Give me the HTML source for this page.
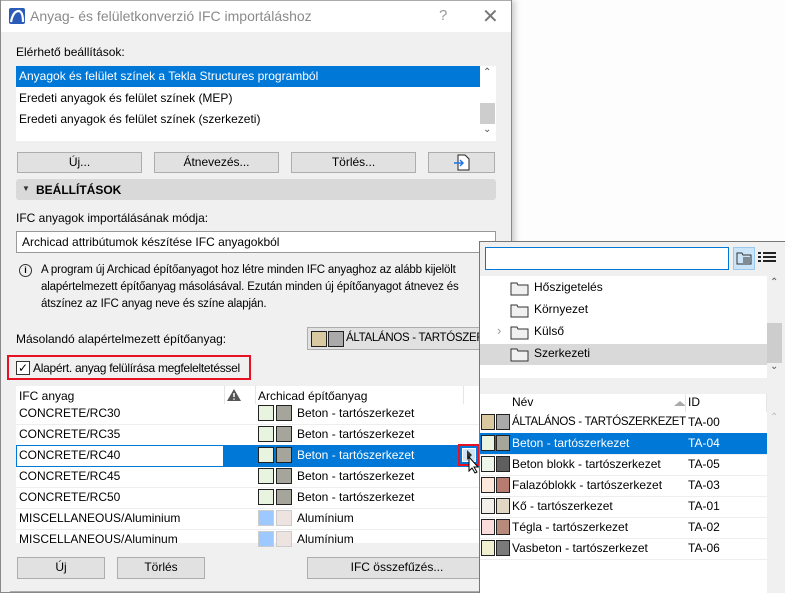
<!DOCTYPE html>
<html><head><meta charset="utf-8"><style>
*{box-sizing:border-box;margin:0;padding:0}
body{width:785px;height:593px;overflow:hidden;background:#fdfdfd;font-family:"Liberation Sans",sans-serif;font-size:12px;color:#000;position:relative}
.a{position:absolute;white-space:nowrap}
.btn{position:absolute;background:#e1e1e1;border:1px solid #adadad;text-align:center;line-height:19px;font-size:12px}
.sw{position:absolute;width:16px;height:16px;border:1px solid #222}
.ps{position:absolute;width:14px;height:16px;border:1px solid #222}
.t{position:absolute;line-height:21px;height:21px;white-space:nowrap}
.n{letter-spacing:-0.3px}
</style></head><body>
<!-- dialog -->
<div class="a" style="left:0;top:0;width:512px;height:593px;background:#f0f0f0;border:1px solid #888;border-top:none;box-shadow:3px 0 6px rgba(0,0,0,.2)"></div>
<div class="a" style="left:1px;top:0;width:510px;height:32px;background:#fff;border-top:1px solid #aaa"></div>
<svg class="a" style="left:9px;top:8px" width="16" height="16"><rect width="16" height="16" rx="2" fill="#2a5bb8"/><path d="M2 14 Q4 3 10 3 Q14 4 14 14" stroke="#fff" stroke-width="2.2" fill="none"/></svg>
<div class="a" style="left:30px;top:8px;font-size:14px;color:#8a8a8a">Anyag- és felületkonverzió IFC importáláshoz</div>
<div class="a" style="left:439px;top:7px;font-size:15px;color:#999">?</div>
<div class="a" style="left:482px;top:4px;font-size:20px;color:#777">✕</div>
<div class="a" style="left:16px;top:45px">Elérhető beállítások:</div>
<div class="a" style="left:16px;top:66px;width:480px;height:75px;background:#fff"></div>
<div class="a" style="left:16px;top:66px;width:464px;height:21px;background:#0078d7"></div>
<div class="t" style="left:19px;top:66px;color:#fff">Anyagok és felület színek a Tekla Structures programból</div>
<div class="t" style="left:19px;top:88px">Eredeti anyagok és felület színek (MEP)</div>
<div class="t" style="left:19px;top:109px">Eredeti anyagok és felület színek (szerkezeti)</div>
<div class="a" style="left:480px;top:103px;width:15px;height:21px;background:#cdcdcd"></div>
<div class="a" style="left:483px;top:67px;font-size:10px;color:#555">&#8963;</div>
<div class="a" style="left:483px;top:124px;font-size:10px;color:#555">&#8964;</div>
<div class="btn" style="left:17px;top:152px;width:125px;height:21px">Új...</div>
<div class="btn" style="left:154px;top:152px;width:125px;height:21px">Átnevezés...</div>
<div class="btn" style="left:291px;top:152px;width:125px;height:21px">Törlés...</div>
<div class="btn" style="left:428px;top:152px;width:67px;height:21px"></div>
<svg class="a" style="left:454px;top:154px" width="16" height="17"><path d="M4 1h7l4 4v11H4z" fill="#fff" stroke="#222"/><path d="M0 9h9M6 6l3 3-3 3" stroke="#1a73e8" stroke-width="1.4" fill="none"/></svg>
<div class="a" style="left:16px;top:179px;width:480px;height:21px;background:#d9d9d9;border-radius:3px"></div>
<div class="a" style="left:22px;top:184px;font-size:8px;color:#333">▼</div>
<div class="a" style="left:36px;top:183px;font-weight:bold">BEÁLLÍTÁSOK</div>
<div class="a" style="left:16px;top:211px">IFC anyagok importálásának módja:</div>
<div class="a" style="left:16px;top:231px;width:480px;height:22px;background:#fff;border:1px solid #999"></div>
<div class="a" style="left:22px;top:235px">Archicad attribútumok készítése IFC anyagokból</div>
<div class="a" style="left:19px;top:264px;width:13px;height:13px;border:1px solid #333;border-radius:50%;font-size:9px;text-align:center;line-height:11px;font-weight:bold">i</div>
<div class="a" style="left:41px;top:262px;line-height:17px;font-size:11.5px;letter-spacing:-0.15px">A program új Archicad építőanyagot hoz létre minden IFC anyaghoz az alább kijelölt<br>alapértelmezett építőanyag másolásával. Ezután minden új építőanyagot átnevez és<br>átszínez az IFC anyag neve és színe alapján.</div>
<div class="a" style="left:16px;top:332px">Másolandó alapértelmezett építőanyag:</div>
<div class="btn" style="left:307px;top:327px;width:180px;height:23px;text-align:left"></div>
<div class="sw" style="left:311px;top:331px;background:#d9c9a0"></div>
<div class="sw" style="left:328px;top:331px;background:#aaa"></div>
<div class="a n" style="left:346px;top:332px;font-size:11.5px">ÁLTALÁNOS - TARTÓSZER...</div>
<div class="a" style="left:7px;top:355px;width:244px;height:25px;border:2px solid #e81123"></div>
<div class="a" style="left:16px;top:361px;width:14px;height:14px;border:1px solid #333;background:#fff;font-size:12px;line-height:12px;text-align:center">✓</div>
<div class="a n" style="left:33px;top:361px">Alapért. anyag felülírása megfeleltetéssel</div>
<!-- table -->
<div class="a" style="left:16px;top:386px;width:464px;height:157px;background:#fff"></div>
<div class="a" style="left:19px;top:389px">IFC anyag</div>
<div class="a" style="left:224px;top:386px;width:1px;height:18px;background:#e5e5e5"></div>
<svg class="a" style="left:226px;top:388px" width="16" height="14"><path d="M8 1L15 13H1z" fill="#555"/><path d="M8 5v4M8 10.5v1.2" stroke="#fff" stroke-width="1.5"/></svg>
<div class="a" style="left:255px;top:386px;width:1px;height:18px;background:#e5e5e5"></div>
<div class="a" style="left:258px;top:389px">Archicad építőanyag</div>
<div class="a" style="left:463px;top:386px;width:1px;height:18px;background:#e5e5e5"></div>
<div class="a" style="left:16px;top:445px;width:208px;height:22px;border:1px solid #0078d7;background:#fff"></div>
<div class="a" style="left:224px;top:445px;width:255px;height:22px;background:#0078d7"></div>
<div class="t" style="left:19px;top:403px">CONCRETE/RC30</div>
<div class="t" style="left:19px;top:424px">CONCRETE/RC35</div>
<div class="t" style="left:19px;top:445px">CONCRETE/RC40</div>
<div class="t" style="left:19px;top:466px">CONCRETE/RC45</div>
<div class="t" style="left:19px;top:487px">CONCRETE/RC50</div>
<div class="t" style="left:19px;top:508px">MISCELLANEOUS/Aluminium</div>
<div class="t" style="left:19px;top:529px">MISCELLANEOUS/Aluminum</div>
<div class="a" style="left:16px;top:424px;width:464px;height:1px;background:#eee"></div>
<div class="a" style="left:16px;top:487px;width:464px;height:1px;background:#eee"></div>
<div class="a" style="left:16px;top:508px;width:464px;height:1px;background:#eee"></div>
<div class="a" style="left:16px;top:529px;width:464px;height:1px;background:#eee"></div>
<div class="sw" style="left:258px;top:405px;background:#e8f4e0"></div><div class="sw" style="left:276px;top:405px;background:#a6a59c"></div><div class="t" style="left:297px;top:403px">Beton - tartószerkezet</div>
<div class="sw" style="left:258px;top:426px;background:#e8f4e0"></div><div class="sw" style="left:276px;top:426px;background:#a6a59c"></div><div class="t" style="left:297px;top:424px">Beton - tartószerkezet</div>
<div class="sw" style="left:258px;top:447px;background:#e8f4e0"></div><div class="sw" style="left:276px;top:447px;background:#a6a59c"></div><div class="t" style="left:297px;top:445px;color:#fff">Beton - tartószerkezet</div>
<div class="sw" style="left:258px;top:468px;background:#e8f4e0"></div><div class="sw" style="left:276px;top:468px;background:#a6a59c"></div><div class="t" style="left:297px;top:466px">Beton - tartószerkezet</div>
<div class="sw" style="left:258px;top:489px;background:#e8f4e0"></div><div class="sw" style="left:276px;top:489px;background:#a6a59c"></div><div class="t" style="left:297px;top:487px">Beton - tartószerkezet</div>
<div class="sw" style="left:258px;top:510px;background:#9ec9ff;border-color:#ccc"></div><div class="sw" style="left:276px;top:510px;background:#ede3e0;border-color:#ccc"></div><div class="t" style="left:297px;top:508px">Alumínium</div>
<div class="sw" style="left:258px;top:531px;background:#9ec9ff;border-color:#ccc"></div><div class="sw" style="left:276px;top:531px;background:#ede3e0;border-color:#ccc"></div><div class="t" style="left:297px;top:529px">Alumínium</div>
<div class="a" style="left:458px;top:444px;width:22px;height:22px;border:2px solid #e81123"></div>
<div class="a" style="left:462px;top:448px;width:14px;height:14px;background:#cfe3f5;border:1px solid #fff"></div>
<div class="a" style="left:467px;top:450px;width:0;height:0;border-left:5px solid #333;border-top:5px solid transparent;border-bottom:5px solid transparent"></div>
<svg class="a" style="left:468px;top:456px" width="12" height="18"><path d="M1 1v14l3-3 3 5 2-1-3-5h4z" fill="#fff" stroke="#000"/></svg>
<div class="btn" style="left:17px;top:557px;width:88px;height:22px">Új</div>
<div class="btn" style="left:117px;top:557px;width:88px;height:22px">Törlés</div>
<div class="btn" style="left:307px;top:557px;width:180px;height:22px">IFC összefűzés...</div>
<div class="a" style="left:10px;top:591px;width:470px;height:1px;background:#aaa"></div>
<!-- popup -->
<div class="a" style="left:479px;top:241px;width:306px;height:352px;background:#f0f0f0;border:1px solid #777;border-right:none;border-bottom:none"></div>
<div class="a" style="left:485px;top:247px;width:244px;height:23px;background:#fff;border:1px solid #0078d7"></div>
<div class="a" style="left:733px;top:247px;width:22px;height:23px;background:#cce4f7;border:1px solid #99c9ef"></div>
<svg class="a" style="left:736px;top:250px" width="17" height="17"><path d="M1 3h5l1 2h8v9H1z" fill="none" stroke="#333"/><path d="M7 8h7M7 10h7M7 12h7" stroke="#333"/></svg>
<svg class="a" style="left:758px;top:251px" width="18" height="14"><path d="M0 2h3M5 2h13M0 6h3M5 6h13M0 10h3M5 10h13" stroke="#222" stroke-width="2"/></svg>
<div class="a" style="left:480px;top:276px;width:287px;height:102px;background:#fff"></div>
<div class="a" style="left:480px;top:344px;width:287px;height:21px;background:#d9d9d9"></div>
<div class="a" style="left:767px;top:276px;width:15px;height:102px;background:#f0f0f0"></div>
<div class="a" style="left:767px;top:323px;width:15px;height:40px;background:#cdcdcd"></div>
<div class="a" style="left:770px;top:277px;font-size:10px;color:#555">&#8963;</div>
<div class="a" style="left:770px;top:361px;font-size:10px;color:#555">&#8964;</div>
<svg class="a" style="left:510px;top:280px" width="20" height="85"><g fill="#f0f0f0" stroke="#333"><path d="M1 3h6l1 2h10v10H1z"/><path d="M1 25h6l1 2h10v10H1z"/><path d="M1 47h6l1 2h10v10H1z"/><path d="M1 69h6l1 2h10v10H1z"/></g></svg>
<div class="a" style="left:497px;top:323px;color:#999;font-size:13px">›</div>
<div class="t" style="left:534px;top:277px">Hőszigetelés</div>
<div class="t" style="left:534px;top:299px">Környezet</div>
<div class="t" style="left:534px;top:321px">Külső</div>
<div class="t" style="left:534px;top:343px">Szerkezeti</div>
<div class="a" style="left:480px;top:394px;width:287px;height:199px;background:#fff"></div>
<div class="t" style="left:512px;top:393px;height:19px;line-height:19px">Név</div>
<div class="a" style="left:674px;top:401px;width:0;height:0;border-bottom:5px solid #aaa;border-left:6px solid transparent;border-right:6px solid transparent"></div>
<div class="a" style="left:685px;top:394px;width:1px;height:18px;background:#e5e5e5"></div>
<div class="a" style="left:766px;top:394px;width:1px;height:18px;background:#e5e5e5"></div>
<div class="t" style="left:688px;top:393px;height:19px;line-height:19px">ID</div>
<div class="a" style="left:480px;top:433px;width:287px;height:21px;background:#0078d7"></div>
<div class="ps" style="left:481px;top:414px;background:#d9c9a0"></div><div class="ps" style="left:496px;top:414px;background:#aaa"></div><div class="t n" style="left:512px;top:412px;font-size:11.5px">ÁLTALÁNOS - TARTÓSZERKEZET</div><div class="t" style="left:688px;top:412px">TA-00</div>
<div class="ps" style="left:481px;top:435px;background:#e8f4e0"></div><div class="ps" style="left:496px;top:435px;background:#a6a59c"></div><div class="t" style="left:512px;top:433px;color:#fff">Beton - tartószerkezet</div><div class="t" style="left:688px;top:433px;color:#fff">TA-04</div>
<div class="ps" style="left:481px;top:456px;background:#eef6ea"></div><div class="ps" style="left:496px;top:456px;background:#5f5f5f"></div><div class="t" style="left:512px;top:454px">Beton blokk - tartószerkezet</div><div class="t" style="left:688px;top:454px">TA-05</div>
<div class="ps" style="left:481px;top:477px;background:#fde8dc"></div><div class="ps" style="left:496px;top:477px;background:#b77b70"></div><div class="t" style="left:512px;top:475px">Falazóblokk - tartószerkezet</div><div class="t" style="left:688px;top:475px">TA-03</div>
<div class="ps" style="left:481px;top:498px;background:#f3efea"></div><div class="ps" style="left:496px;top:498px;background:#e2d7c2"></div><div class="t" style="left:512px;top:496px">Kő - tartószerkezet</div><div class="t" style="left:688px;top:496px">TA-01</div>
<div class="ps" style="left:481px;top:519px;background:#fbdcdc"></div><div class="ps" style="left:496px;top:519px;background:#b88a7c"></div><div class="t" style="left:512px;top:517px">Tégla - tartószerkezet</div><div class="t" style="left:688px;top:517px">TA-02</div>
<div class="ps" style="left:481px;top:540px;background:#f1f0d0"></div><div class="ps" style="left:496px;top:540px;background:#7a7a7a"></div><div class="t" style="left:512px;top:538px">Vasbeton - tartószerkezet</div><div class="t" style="left:688px;top:538px">TA-06</div>
<div class="a" style="left:480px;top:454px;width:287px;height:1px;background:#eee"></div>
<div class="a" style="left:480px;top:475px;width:287px;height:1px;background:#eee"></div>
<div class="a" style="left:480px;top:496px;width:287px;height:1px;background:#eee"></div>
<div class="a" style="left:480px;top:517px;width:287px;height:1px;background:#eee"></div>
<div class="a" style="left:480px;top:538px;width:287px;height:1px;background:#eee"></div>
<div class="a" style="left:480px;top:559px;width:287px;height:1px;background:#eee"></div>
<div class="a" style="left:770px;top:412px;font-size:10px;color:#bbb">&#8963;</div>
</body></html>
